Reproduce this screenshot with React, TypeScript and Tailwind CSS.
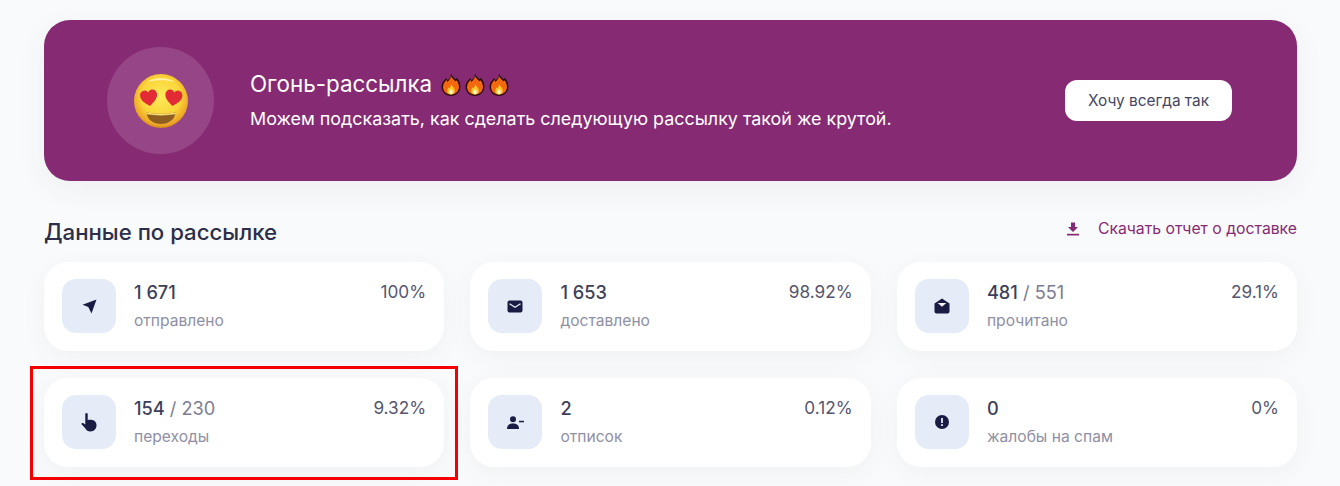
import React, { ReactNode } from 'react';

const INK = '#1b1c44';
const HEART = 'M8.500 16C3 12 0 9 0 5 0 2 2 0 4.500 0 6.300 0 7.800 1 8.500 2.500 9.200 1 10.700 0 12.500 0 15 0 17 2 17 5 17 9 14 12 8.500 16Z';

function Face() {
  return (
    <svg width="54" height="54" viewBox="0 0 54 54">
      <defs>
        <radialGradient id="faceFill" cx="50%" cy="42%" r="60%">
          <stop offset="0%" stopColor="#fdeb5a" />
          <stop offset="60%" stopColor="#fbd53a" />
          <stop offset="88%" stopColor="#eda526" />
          <stop offset="100%" stopColor="#c77d18" />
        </radialGradient>
      </defs>
      <circle cx="27" cy="27" r="27" fill="url(#faceFill)" />
      <path d="M13 8c7-5 21-5 28 0-8-2.500-20-2.500-28 0z" fill="#fff6c0" opacity="0.85" />
      <path d={HEART} fill="#e32b35" transform="translate(6.500 16) rotate(-8 8.500 8)" />
      <path d={HEART} fill="#e32b35" transform="translate(31 16) rotate(8 8.500 8)" />
      <path d="M12.500 38.500c9 1.700 20 1.700 29 0-.8 7.500-7 11.500-14.500 11.500s-13.700-4-14.500-11.500z" fill="#8f5f22" />
      <path d="M12.500 38.500c9 1.700 20 1.700 29 0l-.3 1.800c-9 1.500-19.400 1.500-28.400 0z" fill="#f6dd72" />
    </svg>
  );
}

function Flame() {
  return (
    <svg width="20" height="25" viewBox="0 0 20 24">
      <path d="M10 1c1 3 3 4 5 6 .4-.8.600-1.500.600-2 2.400 2.500 3.900 5.800 3.900 9 0 5.500-4.300 9.500-9.500 9.500S.5 19.500.5 14.500C.5 10 3.500 8 5 5.500c.8.800 1.200 1.500 1.500 2.500C8.500 6 10 4 10 1z" fill="#2b0d0d" />
      <path d="M10 3.500c1 2.500 3 3.500 4.800 5.500.3-.4.500-.8.600-1.200 1.700 2 2.600 4.300 2.600 6.700 0 4.500-3.600 7.500-8 7.500s-8-3-8-7.500c0-3.500 2.200-5.200 3.500-7 .4.600.7 1.200.8 2 2-1.700 3.500-3.500 3.700-6.500z" fill="#f4680f" />
      <path d="M10 11.500c.8 2 3.800 3.500 3.800 6.500 0 2.500-1.800 4-3.800 4s-3.800-1.500-3.800-4c0-1.500.9-2.300 1.600-3.200.3.400.5.700.6 1.100 1-1.100 1.500-2.700 1.600-4.400z" fill="#fdc72e" />
      <path d="M10 16.500c.5 1 1.800 1.800 1.800 3 0 1.300-.9 2.300-1.800 2.300s-1.800-1-1.800-2.300c0-1.200 1.300-2 1.800-3z" fill="#fff6c9" />
    </svg>
  );
}

function DownloadIcon() {
  return (
    <svg width="12" height="14" viewBox="0 0 12 14" fill="#862a74">
      <path d="M4 0.500h4v4.500h3l-5 5-5-5h3z" />
      <rect x="0" y="11.800" width="12" height="1.700" />
    </svg>
  );
}

function SendIcon() {
  return (
    <svg width="15" height="15" viewBox="0 0 15 15" fill={INK}>
      <path d="M14.500 0.500 L0.500 5.800 L6.300 8 L9.500 14.500 Z" />
    </svg>
  );
}

function MailIcon() {
  return (
    <svg width="16" height="13" viewBox="0 0 16 13">
      <rect x="0.500" y="0.500" width="15" height="12" rx="2" fill={INK} />
      <path d="M2.500 3.800 L8 7.300 L13.500 3.800" fill="none" stroke="#e6ebf8" strokeWidth="1.300" />
    </svg>
  );
}

function OpenMailIcon() {
  return (
    <svg width="16" height="16" viewBox="0 0 16 16">
      <path d="M8 0.500 L15.500 5.500 V13.500 a2 2 0 0 1-2 2 H2.500 a2 2 0 0 1-2-2 V5.500 Z" fill={INK} />
      <path d="M3.700 5 H12.300 L8 8.700 Z" fill="#f4f6fc" />
    </svg>
  );
}

function HandIcon() {
  return (
    <svg width="16" height="19" viewBox="0 0 16 19" fill={INK}>
      <path d="M4.300 1.300 a1.200 1.200 0 0 1 2.400 0 V7 c3-.8 8.500-.3 8.800 4.800 .2 4-2.500 6.700-6 6.700-3 0-4.500-1.700-5.500-3.500 L0.500 11.300 C0.100 10.500 1.300 9.500 2.500 10.300 L4.300 11.500 Z" />
    </svg>
  );
}

function UserMinusIcon() {
  return (
    <svg width="17" height="13" viewBox="0 0 17 13" fill={INK}>
      <circle cx="6" cy="3.200" r="3" />
      <path d="M0 13 c0-4 2.500-5.500 6-5.500 s6 1.500 6 5.500 z" />
      <rect x="12" y="4.800" width="5" height="1.500" />
    </svg>
  );
}

function AlertIcon() {
  return (
    <svg width="14" height="14" viewBox="0 0 14 14">
      <circle cx="7" cy="7" r="7" fill={INK} />
      <rect x="6.100" y="3" width="1.800" height="5" fill="#e6ebf8" />
      <rect x="6.100" y="9.200" width="1.800" height="1.800" fill="#e6ebf8" />
    </svg>
  );
}

function StatCard({ icon, value, total, label, percent, highlighted }: {
  icon: ReactNode;
  value: string;
  total?: string;
  label: string;
  percent: string;
  highlighted?: boolean;
}) {
  return (
    <div className="relative">
      <div className="flex h-[88.500px] items-center rounded-[24px] bg-white px-[18px] shadow-[0_6px_24px_rgba(60,70,110,0.05)]">
        <div className="flex h-[54px] w-[54px] shrink-0 items-center justify-center rounded-[14px] bg-[#e6ebf8]">
          {icon}
        </div>
        <div className="ml-[18px] flex-1 pb-[1px]">
          <div className="flex items-start justify-between">
            <div className="text-[18.200px] leading-[22px] font-medium text-[#3d3f58]">
              {value}
              {total && <span className="font-normal text-[#7c7d92]"> / {total}</span>}
            </div>
            <div className="text-[17.200px] leading-[22px] text-[#55566e]">{percent}</div>
          </div>
          <div className="mt-[8px] text-[15.600px] leading-[20px] text-[#8f90a3]">{label}</div>
        </div>
      </div>
      {highlighted && (
        <div className="absolute top-[-12px] right-[-14px] bottom-[-13px] left-[-14px] border-[3px] border-[#f50000]" />
      )}
    </div>
  );
}

export default function App() {
  return (
    <div className="h-[486px] w-[1340px] overflow-hidden bg-[#f9fafb] pt-[20px] pr-[43px] pl-[44px] font-['Inter',sans-serif]">
      <div className="flex h-[161px] items-center justify-between rounded-[26px] bg-[#862a74] pr-[65px] pl-[63px] shadow-[0_8px_30px_rgba(60,70,110,0.06)]">
        <div className="flex items-center">
          <div className="flex h-[107px] w-[107px] items-center justify-center rounded-full bg-white/[.13]">
            <Face />
          </div>
          <div className="ml-[36px]">
            <div className="flex items-center text-[22.400px] leading-[28px] text-white">
              Огонь-рассылка
              <span className="ml-[9px] flex gap-[4px]">
                <Flame />
                <Flame />
                <Flame />
              </span>
            </div>
            <div className="mt-[9px] text-[17.900px] leading-[24px] text-white">
              Можем подсказать, как сделать следующую рассылку такой же крутой.
            </div>
          </div>
        </div>
        <button className="flex h-[41px] w-[167px] items-center justify-center rounded-[12px] bg-white text-[15.400px] text-[#45465f]">
          Хочу всегда так
        </button>
      </div>

      <div className="mt-[36px] flex h-[29px] items-center justify-between">
        <h2 className="text-[22.200px] leading-[28px] font-medium text-[#2d2e4a]">Данные по рассылке</h2>
        <a className="mb-[6px] flex items-center text-[15.750px] text-[#862a74]">
          <DownloadIcon />
          <span className="ml-[19px]">Скачать отчет о доставке</span>
        </a>
      </div>

      <div className="mt-[16px] grid grid-cols-3 gap-x-[26.400px] gap-y-[27.500px]">
        <StatCard icon={<SendIcon />} value="1 671" label="отправлено" percent="100%" />
        <StatCard icon={<MailIcon />} value="1 653" label="доставлено" percent="98.92%" />
        <StatCard icon={<OpenMailIcon />} value="481" total="551" label="прочитано" percent="29.1%" />
        <StatCard icon={<HandIcon />} value="154" total="230" label="переходы" percent="9.32%" highlighted />
        <StatCard icon={<UserMinusIcon />} value="2" label="отписок" percent="0.12%" />
        <StatCard icon={<AlertIcon />} value="0" label="жалобы на спам" percent="0%" />
      </div>
    </div>
  );
}
